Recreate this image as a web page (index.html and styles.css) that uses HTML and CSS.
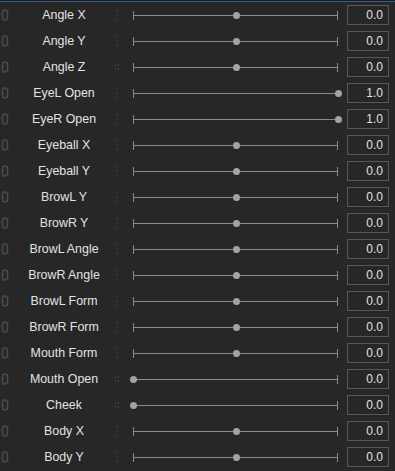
FILE: index.html
```html
<!DOCTYPE html>
<html lang="en">
<head>
  <meta charset="UTF-8" />
  <meta name="viewport" content="width=device-width, initial-scale=1.0"/>
  <title>Parameters</title>
  <link rel="stylesheet" href="styles.css">
</head>
<body>
  <div class="panel">
    <div id="params" class="params"></div>
  </div>

  <script>
    const params = [
      ["Angle X", 0, -30, 30, "dots"],
      ["Angle Y", 0, -30, 30, "dots"],
      ["Angle Z", 0, -30, 30, "grid"],
      ["EyeL Open", 1, 0, 1, "dots"],
      ["EyeR Open", 1, 0, 1, "dots"],
      ["Eyeball X", 0, -1, 1, "dots"],
      ["Eyeball Y", 0, -1, 1, "dots"],
      ["BrowL Y", 0, -1, 1, "dots"],
      ["BrowR Y", 0, -1, 1, "dots"],
      ["BrowL Angle", 0, -1, 1, "dots"],
      ["BrowR Angle", 0, -1, 1, "dots"],
      ["BrowL Form", 0, -1, 1, "dots"],
      ["BrowR Form", 0, -1, 1, "dots"],
      ["Mouth Form", 0, -1, 1, "dots"],
      ["Mouth Open", 0, 0, 1, "grid"],
      ["Cheek", 0, 0, 1, "grid"],
      ["Body X", 0, -10, 10, "dots"],
      ["Body Y", 0, -10, 10, "dots"]
    ];

    const linkIcon = '<svg width="8" height="12" viewBox="0 0 8 12"><rect x="1.5" y="1" width="5" height="10" rx="2.5" fill="none" stroke="#4a4a4a" stroke-width="1.6"/></svg>';
    const dotsIcon = '<svg width="6" height="14" viewBox="0 0 6 14"><circle cx="3" cy="2" r="0.8" fill="#4a4a4a"/><circle cx="3" cy="7" r="0.8" fill="#4a4a4a"/><circle cx="3" cy="12" r="0.8" fill="#4a4a4a"/></svg>';
    const gridIcon = '<svg width="6" height="14" viewBox="0 0 6 14"><circle cx="1.5" cy="5" r="0.8" fill="#4a4a4a"/><circle cx="4.5" cy="5" r="0.8" fill="#4a4a4a"/><circle cx="1.5" cy="9" r="0.8" fill="#4a4a4a"/><circle cx="4.5" cy="9" r="0.8" fill="#4a4a4a"/></svg>';

    const list = document.getElementById("params");
    params.forEach(p => {
      const [name, val, min, max, handle] = p;
      const pos = (val - min) / (max - min) * 100;
      const row = document.createElement("div");
      row.className = "row";
      let ticks = "";
      if (pos > 0) ticks += '<span class="tick tick-min"></span>';
      if (pos < 100) ticks += '<span class="tick tick-max"></span>';
      row.innerHTML =
        '<span class="link">' + linkIcon + '</span>' +
        '<span class="name">' + name + '</span>' +
        '<span class="handle">' + (handle == "grid" ? gridIcon : dotsIcon) + '</span>' +
        '<div class="slider"><span class="track"></span>' + ticks +
        '<span class="thumb" style="left: ' + pos + '%"></span></div>' +
        '<div class="value">' + val.toFixed(1) + '</div>';
      list.appendChild(row);
    });
  </script>
</body>
</html>
```

FILE: styles.css
```css
body {
  margin: 0;
  background: #272727;
  font-family: "Liberation Sans", Arial, sans-serif;
  font-size: 12px;
  color: #e2e2e2;
}
.panel {
  border-top: 1px solid #1c1c1c;
}
.params {
  border-top: 1px solid #3b5c86;
}
.row {
  display: flex;
  align-items: center;
  height: 26px;
}
.link {
  width: 14px;
  display: flex;
  padding-left: 1px;
  box-sizing: border-box;
}
.name {
  width: 100px;
  text-align: center;
  white-space: nowrap;
  font-size: 12.4px;
}
.handle {
  width: 6px;
  display: flex;
  margin-right: 13px;
}
.slider {
  position: relative;
  width: 205px;
  height: 12px;
}
.track {
  position: absolute;
  left: 0;
  right: 0;
  top: 6px;
  height: 1px;
  background: #8a8a8a;
}
.tick {
  position: absolute;
  top: 2px;
  width: 1px;
  height: 9px;
  background: #8a8a8a;
}
.tick-min {
  left: 0;
}
.tick-max {
  right: 0;
}
.thumb {
  position: absolute;
  top: 3px;
  width: 7px;
  height: 7px;
  margin-left: -3px;
  border-radius: 50%;
  background: #a3a3a3;
}
.value {
  margin-left: 9px;
  width: 42px;
  height: 20px;
  box-sizing: border-box;
  border: 1px solid #575757;
  text-align: right;
  padding-right: 5px;
  line-height: 18px;
}
```
